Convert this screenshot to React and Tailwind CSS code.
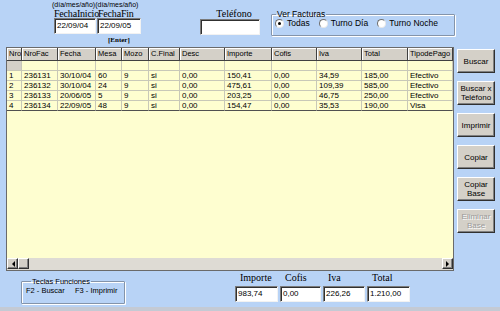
const cols = [
  { label: "Nro", w: "w-[15px]" },
  { label: "NroFac", w: "w-[36px]" },
  { label: "Fecha", w: "w-[38px]" },
  { label: "Mesa", w: "w-[26px]" },
  { label: "Mozo", w: "w-[27px]" },
  { label: "C.Final", w: "w-[31px]" },
  { label: "Desc", w: "w-[45px]" },
  { label: "Importe", w: "w-[47px]" },
  { label: "Cofis", w: "w-[45px]" },
  { label: "Iva", w: "w-[45px]" },
  { label: "Total", w: "w-[46px]" },
  { label: "TipodePago", w: "w-[45px]" },
];

const rows = [
  ["1", "236131", "30/10/04", "60", "9", "si", "0,00", "150,41", "0,00", "34,59", "185,00", "Efectivo"],
  ["2", "236132", "30/10/04", "24", "9", "si", "0,00", "475,61", "0,00", "109,39", "585,00", "Efectivo"],
  ["3", "236133", "20/06/05", "5", "9", "si", "0,00", "203,25", "0,00", "46,75", "250,00", "Efectivo"],
  ["4", "236134", "22/09/05", "48", "9", "si", "0,00", "154,47", "0,00", "35,53", "190,00", "Visa"],
];

const sans = "font-['Liberation_Sans',Arial,sans-serif]";
const serif = "font-['Liberation_Serif','Times_New_Roman',serif]";

const sunken =
  "bg-white border border-t-[#7a7a7a] border-l-[#7a7a7a] border-r-[#f2f2f2] border-b-[#f2f2f2] shadow-[inset_1px_1px_0_#303030]";
const raised =
  "bg-[#d4d0c8] border border-t-white border-l-white border-r-[#303030] border-b-[#303030] shadow-[inset_-1px_-1px_0_#808080]";

function Field({ value, w }) {
  return (
    <div className={`${sunken} ${w} h-[16px] px-[2px] text-[8px] leading-[13px] text-black`}>
      {value}
    </div>
  );
}

function Radio({ checked, label }) {
  return (
    <div className="flex items-center gap-[3px]">
      <div className="w-[9px] h-[9px] rounded-full bg-white border border-t-[#707070] border-l-[#707070] border-r-[#e8e8e8] border-b-[#e8e8e8] flex items-center justify-center">
        {checked && <div className="w-[3px] h-[3px] rounded-full bg-black" />}
      </div>
      <span className="text-[8.5px] leading-[10px]">{label}</span>
    </div>
  );
}

function Button({ children, disabled }) {
  return (
    <div
      className={`${raised} h-[24px] flex items-center justify-center text-center text-[8px] leading-[9px] ${
        disabled ? "text-[#9a9a9a] [text-shadow:1px_1px_0_white]" : "text-black"
      }`}
    >
      {children}
    </div>
  );
}

function Arrow({ dir }) {
  return (
    <div className={`${raised} w-[11px] h-[11px] flex items-center justify-center`}>
      <svg width="4" height="6" viewBox="0 0 4 6">
        {dir === "left" ? (
          <polygon points="4,0 4,6 1,3" fill="black" />
        ) : (
          <polygon points="0,0 0,6 3,3" fill="black" />
        )}
      </svg>
    </div>
  );
}

export default function App() {
  return (
    <div className={`w-[500px] h-[311px] bg-[#b8d3f6] overflow-hidden flex flex-col text-black ${sans}`}>
      {/* Top filters */}
      <div className="h-[47px] flex items-start shrink-0">
        <div className="ml-[52px] w-[92px] flex flex-col">
          <div className="h-[9px] pt-[1px] text-[7px] leading-[8px] whitespace-nowrap">
            (día/mes/año)(día/mes/año)
          </div>
          <div className={`h-[9px] ml-[2px] flex ${serif} text-[10px] leading-[9px] whitespace-nowrap tracking-[-0.2px]`}>
            <span className="w-[44px]">FechaInicio</span>
            <span>FechaFin</span>
          </div>
          <div className="ml-[2px] flex gap-[1px]">
            <Field value="22/09/04" w="w-[42px]" />
            <Field value="22/09/05" w="w-[44px]" />
          </div>
          <div className={`ml-[56px] mt-[2px] ${serif} font-bold text-[7px] leading-[8px]`}>[Enter]</div>
        </div>

        <div className="ml-[56px] w-[60px] pt-[9px] flex flex-col">
          <div className={`${serif} text-[10px] leading-[10px] h-[10px] text-center pl-[8px]`}>Teléfono</div>
          <Field value="" w="w-[60px]" />
        </div>

        <fieldset className="ml-[11px] mt-[9px] w-[184px] h-[27px] border border-[#8494aa] shadow-[1px_1px_0_white,inset_1px_1px_0_white] rounded-[1px] px-[3px]">
          <legend className="ml-[1px] px-[1px] text-[8.5px] leading-[10px]">Ver Facturas</legend>
          <div className="flex items-center gap-[9px] -mt-[1px]">
            <Radio checked label="Todas" />
            <Radio label="Turno Día" />
            <Radio label="Turno Noche" />
          </div>
        </fieldset>
      </div>

      {/* Grid + buttons */}
      <div className="h-[224px] flex shrink-0">
        <div className="ml-[6px] w-[448px] border border-[#6a6a6a] bg-[#fefed0] flex flex-col">
          <div className="flex h-[13px] shrink-0">
            {cols.map((c) => (
              <div
                key={c.label}
                className={`${c.w} shrink-0 bg-[#d4d0c8] border-r border-b border-[#404040] shadow-[inset_1px_1px_0_white] px-[2px] text-[7.5px] leading-[12px] whitespace-nowrap overflow-hidden`}
              >
                {c.label}
              </div>
            ))}
          </div>
          <div className="flex h-[10px] shrink-0">
            {cols.map((c, i) => (
              <div
                key={c.label}
                className={`${c.w} shrink-0 border-r border-b border-[#c8c8b8] ${i === 0 ? "bg-[#d4d0c8]" : ""}`}
              />
            ))}
          </div>
          {rows.map((r, ri) => (
            <div key={r[1]} className="flex h-[10px] shrink-0">
              {r.map((v, i) => (
                <div
                  key={i}
                  className={`${cols[i].w} shrink-0 border-r border-b ${
                    ri === rows.length - 1 ? "border-b-[#505050]" : "border-b-[#c8c8b8]"
                  } border-r-[#c8c8b8] px-[2px] text-[8px] leading-[9px] whitespace-nowrap overflow-hidden`}
                >
                  {v}
                </div>
              ))}
            </div>
          ))}
          <div className="flex-1" />
          <div className="h-[12px] bg-[#dedbd4] flex items-center shrink-0 pb-[1px]">
            <Arrow dir="left" />
            <div className={`${raised} w-[11px] h-[11px]`} />
            <div className="flex-1" />
            <Arrow dir="right" />
          </div>
        </div>

        <div className="ml-[3px] w-[38px] pt-[2px] flex flex-col gap-[8px]">
          <Button>Buscar</Button>
          <Button>
            Buscar x<br />
            Teléfono
          </Button>
          <Button>Imprimir</Button>
          <Button>Copiar</Button>
          <Button>
            Copiar<br />
            Base
          </Button>
          <Button disabled>
            Eliminar<br />
            Base
          </Button>
        </div>
      </div>

      {/* Bottom */}
      <div className="h-[36px] flex items-start shrink-0">
        <fieldset className="ml-[21px] mt-[6px] w-[104px] h-[27px] border border-[#8494aa] shadow-[1px_1px_0_white,inset_1px_1px_0_white] rounded-[1px] px-[4px]">
          <legend className="ml-[5px] px-[1px] text-[7.5px] leading-[9px]">Teclas Funciones</legend>
          <div className="flex text-[7.5px] leading-[10px] whitespace-nowrap">
            <span className="w-[49px]">F2 - Buscar</span>
            <span>F3 - Imprimir</span>
          </div>
        </fieldset>

        <div className="ml-[110px] flex gap-[2px] pt-[1px]">
          {[
            ["Importe", "983,74", "w-[43px]"],
            ["Cofis", "0,00", "w-[41px]"],
            ["Iva", "226,26", "w-[42px]"],
            ["Total", "1.210,00", "w-[43px]"],
          ].map(([l, v, w]) => (
            <div key={l} className="flex flex-col">
              <div className={`${serif} text-[10px] leading-[12px] h-[14px] pl-[5px]`}>{l}</div>
              <Field value={v} w={w} />
            </div>
          ))}
        </div>
      </div>
      <div className="h-[4px] bg-[#c4cad4] shrink-0" />
    </div>
  );
}
